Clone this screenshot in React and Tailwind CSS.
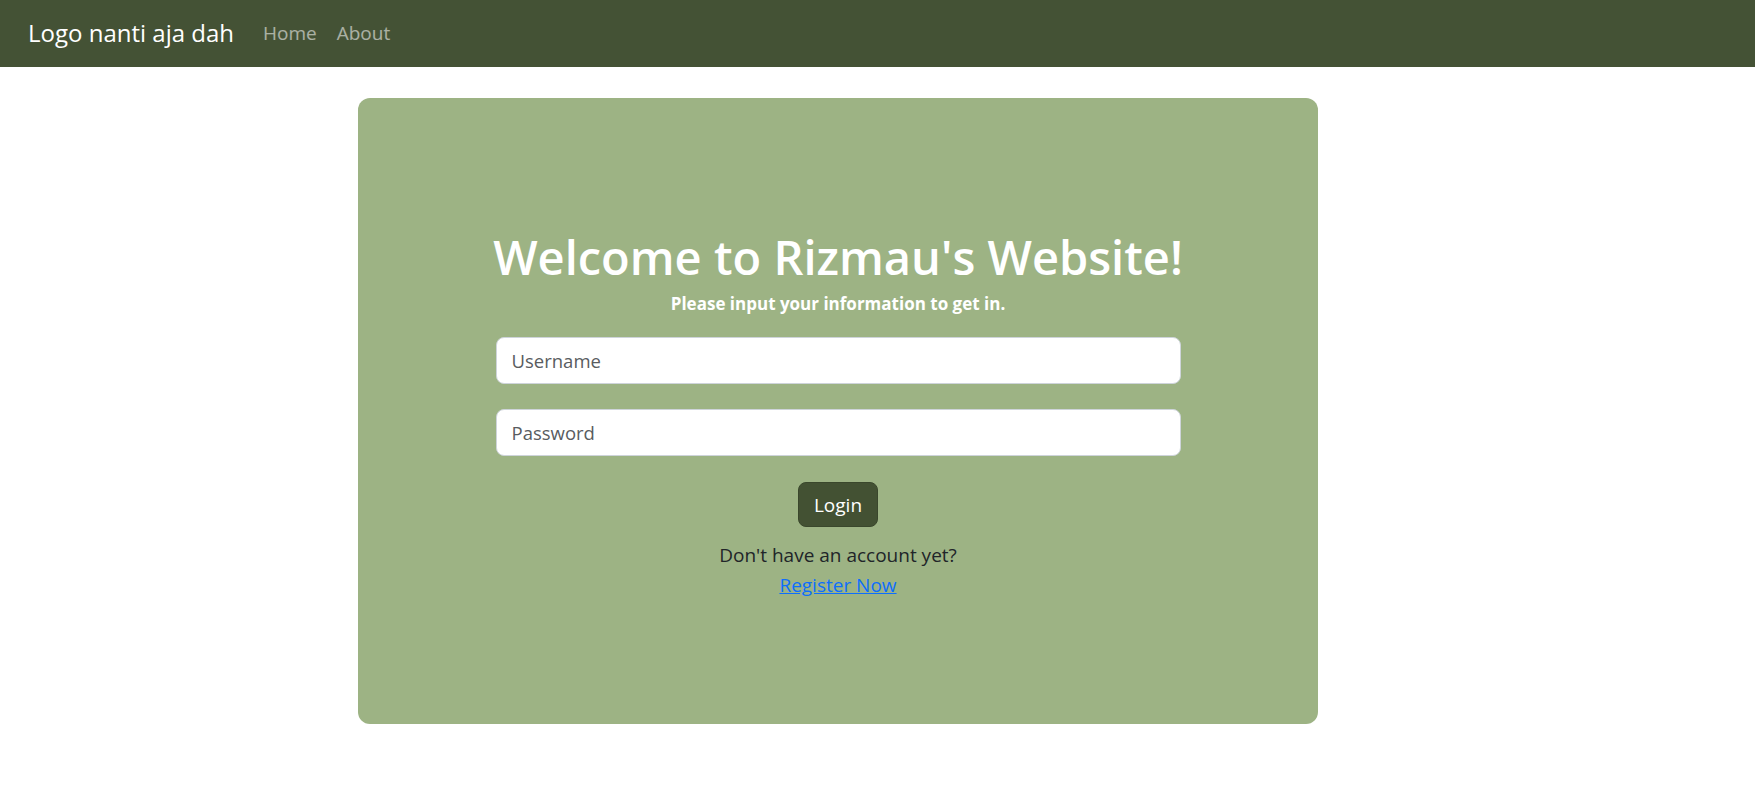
export default function App() {
  return (
    <div className="min-h-screen bg-white" style={{ fontFamily: '"Open Sans", "Noto Sans", sans-serif' }}>
      <nav className="h-[67px] bg-[#445235] flex items-center px-[28px] pb-[1px]">
        <span className="text-white text-[24px] leading-none mr-[29px]">Logo nanti aja dah</span>
        <a className="text-[19px] text-white/55 mr-[20px]">Home</a>
        <a className="text-[19px] text-white/55">About</a>
      </nav>
      <main className="pt-[31px] pl-[358px]">
        <div className="w-[960px] h-[626px] bg-[#9db384] rounded-[12px] flex flex-col items-center justify-center pt-[7px]">
          <h1 className="text-white text-[47px] font-semibold leading-[1.2] mb-[6px]">Welcome to Rizmau's Website!</h1>
          <p className="text-white text-[17px] font-bold leading-[1.5] mb-[21px]">Please input your information to get in.</p>
          <input
            placeholder="Username"
            className="w-[685px] h-[47px] bg-white border border-[#ced4da] rounded-[8px] px-[15px] text-[18.5px] text-[#212529] placeholder:text-[#595c5f] outline-none mb-[25px]"
          />
          <input
            placeholder="Password"
            type="password"
            className="w-[685px] h-[47px] bg-white border border-[#ced4da] rounded-[8px] px-[15px] text-[18.5px] text-[#212529] placeholder:text-[#595c5f] outline-none mb-[26px]"
          />
          <button className="w-[80px] h-[45px] bg-[#435133] border border-[#3a472c] rounded-[8px] text-white text-[19px] mb-[13px]">Login</button>
          <p className="text-[19px] text-[#212529] leading-[30px]">Don't have an account yet?</p>
          <a href="#" className="text-[19px] text-[#0d6efd] underline leading-[30px]">Register Now</a>
        </div>
      </main>
    </div>
  );
}
